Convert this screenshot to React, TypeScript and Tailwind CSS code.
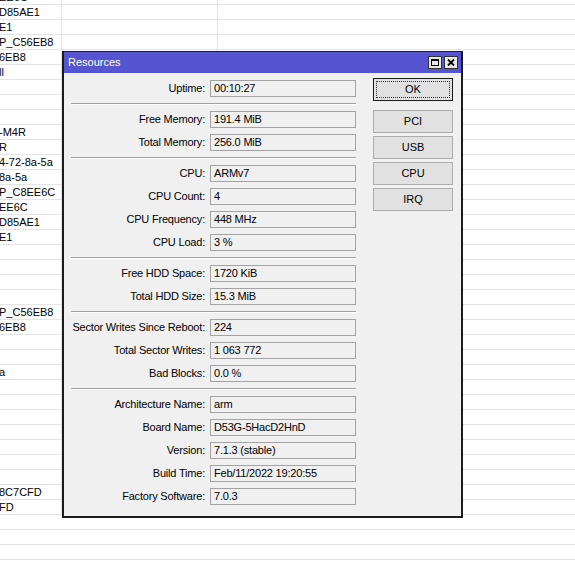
import React from "react";

const rows: string[] = [
  "EE6C", "D85AE1", "E1", "P_C56EB8", "6EB8", "ll", "", "", "", "-M4R", "R",
  "4-72-8a-5a", "8a-5a", "P_C8EE6C", "EE6C", "D85AE1", "E1", "", "", "", "",
  "P_C56EB8", "6EB8", "", "", "a", "", "", "", "", "", "", "", "8C7CFD", "FD",
];

const groups: [string, string][][] = [
  [["Uptime", "00:10:27"]],
  [
    ["Free Memory", "191.4 MiB"],
    ["Total Memory", "256.0 MiB"],
  ],
  [
    ["CPU", "ARMv7"],
    ["CPU Count", "4"],
    ["CPU Frequency", "448 MHz"],
    ["CPU Load", "3 %"],
  ],
  [
    ["Free HDD Space", "1720 KiB"],
    ["Total HDD Size", "15.3 MiB"],
  ],
  [
    ["Sector Writes Since Reboot", "224"],
    ["Total Sector Writes", "1 063 772"],
    ["Bad Blocks", "0.0 %"],
  ],
  [
    ["Architecture Name", "arm"],
    ["Board Name", "D53G-5HacD2HnD"],
    ["Version", "7.1.3 (stable)"],
    ["Build Time", "Feb/11/2022 19:20:55"],
    ["Factory Software", "7.0.3"],
  ],
];

function Field({ label, value }: { label: string; value: string }) {
  return (
    <div className="flex h-[17px] items-center">
      <div className="w-[135px] whitespace-nowrap pr-px text-right leading-none tracking-[-0.2px]">
        {label}:
      </div>
      <div className="ml-[4px] flex h-[17px] w-[146px] items-center whitespace-nowrap border border-[#a3a3a3] bg-[#f0f0f0] pl-[3px] leading-none tracking-[-0.2px]">
        {value}
      </div>
    </div>
  );
}

function Button({ label, focused }: { label: string; focused?: boolean }) {
  return (
    <div
      className={
        focused
          ? "flex h-[23px] items-center justify-center border border-[#1a1a1a] bg-[#e1e1e1] p-[2px]"
          : "flex h-[23px] items-center justify-center border border-[#adadad] bg-[#e1e1e1]"
      }
    >
      {focused ? (
        <div className="flex h-full w-full items-center justify-center border border-dotted border-[#333]">
          {label}
        </div>
      ) : (
        label
      )}
    </div>
  );
}

export default function App() {
  return (
    <div
      className="relative h-[572px] w-[575px] overflow-hidden bg-white text-[11px] text-black"
      style={{ fontFamily: '"Liberation Sans", Arial, sans-serif' }}
    >
      {/* list behind the dialog */}
      <div className="-mt-[10px] flex flex-col">
        {Array.from({ length: 40 }).map((_, i) => (
          <div key={i} className="flex h-[15px] border-b border-[#e4e4e4]">
            <div
              className={
                i < rows.length
                  ? "w-[62px] overflow-hidden whitespace-nowrap border-r border-[#e4e4e4] leading-[14px]"
                  : "w-[62px]"
              }
            >
              <span className="-ml-[1px] block">{rows[i] ?? ""}</span>
            </div>
            <div
              className={
                i < rows.length ? "w-[156px] border-r border-[#e4e4e4]" : "w-[156px]"
              }
            />
            <div className="flex-1" />
          </div>
        ))}
      </div>

      {/* Resources dialog */}
      <div className="absolute left-[62px] top-[51px] flex h-[467px] w-[401px] flex-col border-2 border-t border-[#1c1c1c] bg-[#f0f0f0]">
        <div className="flex h-[21px] items-center justify-between bg-[#5555d2] pl-[4px] pr-[3px] text-white">
          <span className="text-[11px]">Resources</span>
          <div className="flex gap-[2px]">
            <div className="flex h-[13px] w-[14px] items-center justify-center border border-[#333] bg-[#e8e8e8]">
              <svg width="8" height="7" viewBox="0 0 8 7">
                <rect x="0.5" y="0.5" width="7" height="6" fill="none" stroke="#000" />
                <line x1="0" y1="1.5" x2="8" y2="1.5" stroke="#000" />
              </svg>
            </div>
            <div className="flex h-[13px] w-[14px] items-center justify-center border border-[#333] bg-[#e8e8e8]">
              <svg width="8" height="7" viewBox="0 0 8 7">
                <path d="M1 0.5 L7 6.5 M7 0.5 L1 6.5" stroke="#000" strokeWidth="1.8" />
              </svg>
            </div>
          </div>
        </div>

        <div className="flex pl-[7px] pr-[8px] pt-[7px]">
          <div className="flex flex-col">
            {groups.map((g, gi) => (
              <div key={gi} className="flex flex-col">
                {gi > 0 && (
                  <div className="my-[6px] h-[2px] border-t border-b border-t-[#a0a0a0] border-b-white" />
                )}
                <div className="flex flex-col gap-[6px]">
                  {g.map(([l, v]) => (
                    <Field key={l} label={l} value={v} />
                  ))}
                </div>
              </div>
            ))}
          </div>

          <div className="ml-[17px] -mt-[2px] flex w-[81px] flex-col gap-[3px]">
            <div className="mb-[6px]">
              <Button label="OK" focused />
            </div>
            <Button label="PCI" />
            <Button label="USB" />
            <Button label="CPU" />
            <Button label="IRQ" />
          </div>
        </div>
      </div>
    </div>
  );
}
